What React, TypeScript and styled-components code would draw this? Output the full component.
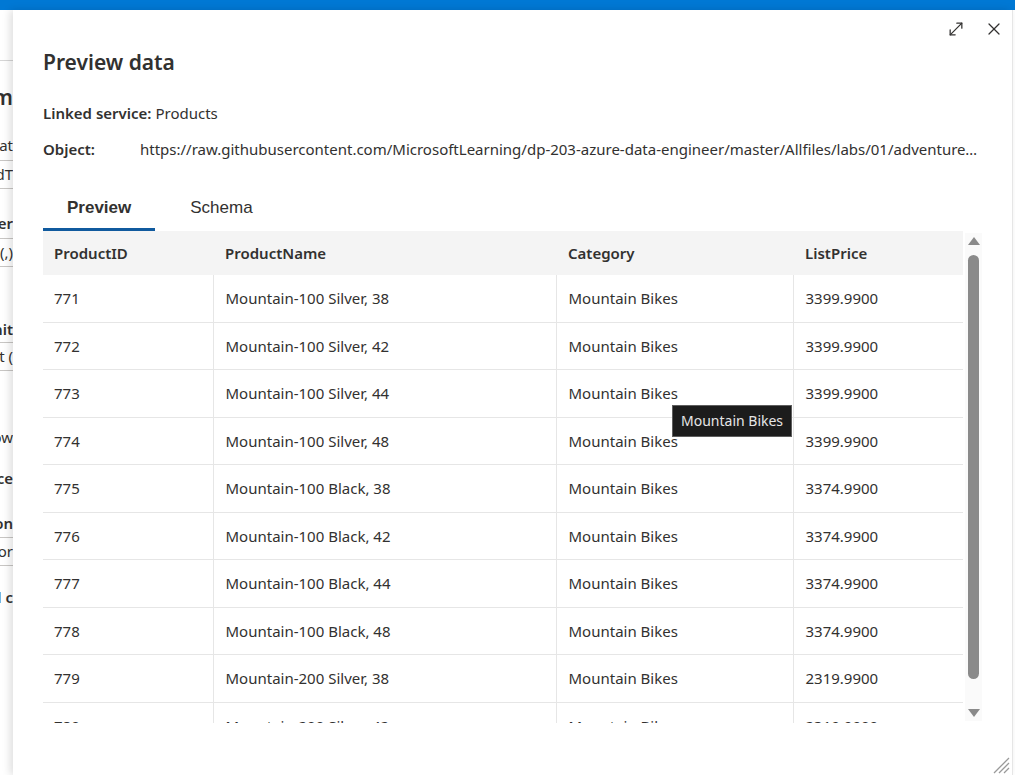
import styled, { createGlobalStyle } from "styled-components";
import { MoveDiagonal, X } from "lucide-react";

const GlobalStyle = createGlobalStyle`
  body {
    margin: 0;
    font-family: "Noto Sans", "Open Sans", sans-serif;
    color: #323130;
    background: #fff;
  }
`;

const Screen = styled.div`
  width: 1015px;
  height: 775px;
  display: flex;
  flex-direction: column;
  overflow: hidden;
`;

const TopBar = styled.div`
  height: 10px;
  background: #0078d4;
  flex-shrink: 0;
`;

const Body = styled.div`
  flex: 1;
  display: flex;
  min-height: 0;
`;

const BackStrip = styled.div`
  width: 13px;
  flex-shrink: 0;
  display: flex;
  flex-direction: column;
  overflow: hidden;
`;

const BackDivider = styled.div<{ $mt: number }>`
  margin-top: ${({ $mt }) => $mt}px;
  border-top: 1px solid #d6d6d6;
`;

const BackText = styled.div<{ $mt: number; $bold?: boolean; $big?: boolean }>`
  margin-top: ${({ $mt }) => $mt}px;
  height: ${({ $big }) => ($big ? 28 : 20)}px;
  line-height: ${({ $big }) => ($big ? 28 : 20)}px;
  font-size: ${({ $big }) => ($big ? 21 : 15)}px;
  font-weight: ${({ $bold }) => ($bold ? 600 : 400)};
  display: flex;
  justify-content: flex-end;
  white-space: nowrap;
  overflow: hidden;
`;

const BackInput = styled.div<{ $mt: number }>`
  margin-top: ${({ $mt }) => $mt}px;
  height: 27px;
  line-height: 27px;
  font-size: 15px;
  border-top: 1px solid #c8c6c4;
  border-bottom: 1px solid #c8c6c4;
  display: flex;
  justify-content: flex-end;
  white-space: nowrap;
  overflow: hidden;
`;

const Panel = styled.div`
  flex: 1;
  min-width: 0;
  position: relative;
  background: #fff;
  box-shadow: -3px 0 8px rgba(0, 0, 0, 0.13);
  border-right: 1px solid #e6e6e6;
  margin-right: 2px;
  padding: 0 29px 0 30px;
  display: flex;
  flex-direction: column;
`;

const IconBar = styled.div`
  height: 36px;
  display: flex;
  justify-content: flex-end;
  align-items: center;
  gap: 18px;
  margin-right: -21px;
  padding-top: 1px;
`;

const IconButton = styled.button`
  border: none;
  background: none;
  padding: 0;
  width: 20px;
  height: 20px;
  display: flex;
  align-items: center;
  justify-content: center;
  color: #323130;
  cursor: pointer;
`;

const Title = styled.h1`
  margin: 1px 0 0;
  font-size: 21px;
  line-height: 28px;
  font-weight: 600;
`;

const MetaRow = styled.div<{ $mt: number }>`
  margin-top: ${({ $mt }) => $mt}px;
  display: flex;
  min-width: 0;
  font-size: 15px;
  line-height: 20px;
  white-space: nowrap;
`;

const MetaLabel = styled.span<{ $width?: number }>`
  font-weight: 600;
  flex-shrink: 0;
  width: ${({ $width }) => ($width ? `${$width}px` : "auto")};
  margin-right: ${({ $width }) => ($width ? 0 : 4)}px;
`;

const MetaValue = styled.span`
  min-width: 0;
  overflow: hidden;
  text-overflow: ellipsis;
`;

const Tabs = styled.div`
  margin-top: 28px;
  display: flex;
  gap: 11px;
`;

const Tab = styled.div<{ $active?: boolean }>`
  height: 41px;
  padding: 0 24px;
  display: flex;
  align-items: center;
  font-family: "Liberation Sans", Arial, sans-serif;
  font-size: 17px;
  font-weight: ${({ $active }) => ($active ? 700 : 400)};
  color: #323130;
  border-bottom: 3px solid ${({ $active }) => ($active ? "#105a9e" : "transparent")};
`;

const GridArea = styled.div`
  position: relative;
  height: 492px;
  display: flex;
  gap: 2px;
  overflow: hidden;
`;

const Table = styled.table`
  width: 920px;
  flex-shrink: 0;
  table-layout: fixed;
  border-collapse: collapse;
  font-size: 15px;
  align-self: flex-start;
`;

const HeadCell = styled.th`
  height: 44px;
  padding: 0 12px;
  text-align: left;
  font-weight: 600;
  background: #f4f4f4;
  &:first-child {
    padding-left: 11px;
  }
`;

const Row = styled.tr`
  border-bottom: 1px solid #e6e6e6;
`;

const Cell = styled.td`
  height: 46.5px;
  padding: 0 12px;
  white-space: nowrap;
  overflow: hidden;
  &:first-child {
    padding-left: 11px;
  }
  & + & {
    border-left: 1px solid #e6e6e6;
  }
`;

const ScrollTrack = styled.div`
  width: 17px;
  margin-top: 2px;
  height: 488px;
  background: #fafafa;
  display: flex;
  flex-direction: column;
  align-items: center;
  padding: 4px 0;
  box-sizing: border-box;
`;

const Arrow = styled.div<{ $down?: boolean }>`
  width: 0;
  height: 0;
  border-left: 6px solid transparent;
  border-right: 6px solid transparent;
  ${({ $down }) =>
    $down ? "border-top: 8px solid #8a8a8a;" : "border-bottom: 8px solid #8a8a8a;"}
  margin-top: ${({ $down }) => ($down ? "auto" : "0")};
`;

const Thumb = styled.div`
  margin-top: 10px;
  width: 11px;
  height: 424px;
  border-radius: 6px;
  background: #8a8a8a;
`;

const Tooltip = styled.div`
  position: absolute;
  left: 629px;
  top: 174px;
  padding: 0 8px;
  height: 30px;
  line-height: 30px;
  background: #1c1c1c;
  border: 1px solid #5e5e5e;
  color: #e6e6e6;
  font-size: 14px;
  white-space: nowrap;
`;

const ResizeGrip = styled.svg`
  position: absolute;
  right: 2px;
  bottom: 1px;
`;

const columns = [
  { key: "id", label: "ProductID", width: 170 },
  { key: "name", label: "ProductName", width: 343 },
  { key: "cat", label: "Category", width: 237 },
  { key: "price", label: "ListPrice", width: 170 },
];

const rows = [
  ["771", "Mountain-100 Silver, 38", "Mountain Bikes", "3399.9900"],
  ["772", "Mountain-100 Silver, 42", "Mountain Bikes", "3399.9900"],
  ["773", "Mountain-100 Silver, 44", "Mountain Bikes", "3399.9900"],
  ["774", "Mountain-100 Silver, 48", "Mountain Bikes", "3399.9900"],
  ["775", "Mountain-100 Black, 38", "Mountain Bikes", "3374.9900"],
  ["776", "Mountain-100 Black, 42", "Mountain Bikes", "3374.9900"],
  ["777", "Mountain-100 Black, 44", "Mountain Bikes", "3374.9900"],
  ["778", "Mountain-100 Black, 48", "Mountain Bikes", "3374.9900"],
  ["779", "Mountain-200 Silver, 38", "Mountain Bikes", "2319.9900"],
  ["780", "Mountain-200 Silver, 42", "Mountain Bikes", "2319.9900"],
];

export default function App() {
  return (
    <>
      <GlobalStyle />
      <Screen>
        <TopBar />
        <Body>
          {/* page behind the flyout, mostly hidden */}
          <BackStrip>
            <BackDivider $mt={50} />
            <BackText $mt={22} $bold $big>
              Form
            </BackText>
            <BackText $mt={24}>Format</BackText>
            <BackInput $mt={5}>DelimitedT</BackInput>
            <BackText $mt={24} $bold>
              Delimiter
            </BackText>
            <BackInput $mt={5}>Comma (,)</BackInput>
            <BackText $mt={52} $bold>
              Limit
            </BackText>
            <BackInput $mt={3}>Default (</BackInput>
            <BackText $mt={56}>Row</BackText>
            <BackText $mt={21} $bold>
              Source
            </BackText>
            <BackText $mt={25} $bold>
              Action
            </BackText>
            <BackInput $mt={4}>None or</BackInput>
            <BackText $mt={21} $bold>
              Label c
            </BackText>
          </BackStrip>

          <Panel>
            <IconBar>
              <IconButton aria-label="Expand">
                <MoveDiagonal size={20} strokeWidth={1.5} />
              </IconButton>
              <IconButton aria-label="Close">
                <X size={22} strokeWidth={1.5} />
              </IconButton>
            </IconBar>

            <Title>Preview data</Title>

            <MetaRow $mt={27}>
              <MetaLabel>Linked service:</MetaLabel>
              <MetaValue>Products</MetaValue>
            </MetaRow>
            <MetaRow $mt={16}>
              <MetaLabel $width={97}>Object:</MetaLabel>
              <MetaValue>
                https://raw.githubusercontent.com/MicrosoftLearning/dp-203-azure-data-engineer/master/Allfiles/labs/01/adventureworks/products.csv
              </MetaValue>
            </MetaRow>

            <Tabs>
              <Tab $active>Preview</Tab>
              <Tab>Schema</Tab>
            </Tabs>

            <GridArea>
              <Table>
                <colgroup>
                  {columns.map((c) => (
                    <col key={c.key} style={{ width: c.width }} />
                  ))}
                </colgroup>
                <thead>
                  <tr>
                    {columns.map((c) => (
                      <HeadCell key={c.key}>{c.label}</HeadCell>
                    ))}
                  </tr>
                </thead>
                <tbody>
                  {rows.map((r) => (
                    <Row key={r[0]}>
                      {r.map((v, i) => (
                        <Cell key={i}>{v}</Cell>
                      ))}
                    </Row>
                  ))}
                </tbody>
              </Table>
              <ScrollTrack>
                <Arrow />
                <Thumb />
                <Arrow $down />
              </ScrollTrack>
              <Tooltip>Mountain Bikes</Tooltip>
            </GridArea>

            <ResizeGrip width="20" height="20" viewBox="0 0 20 20">
              <path d="M19 4 L4 19 M19 9 L9 19 M19 14 L14 19" stroke="#9a9a9a" strokeWidth="1.3" />
            </ResizeGrip>
          </Panel>
        </Body>
      </Screen>
    </>
  );
}
